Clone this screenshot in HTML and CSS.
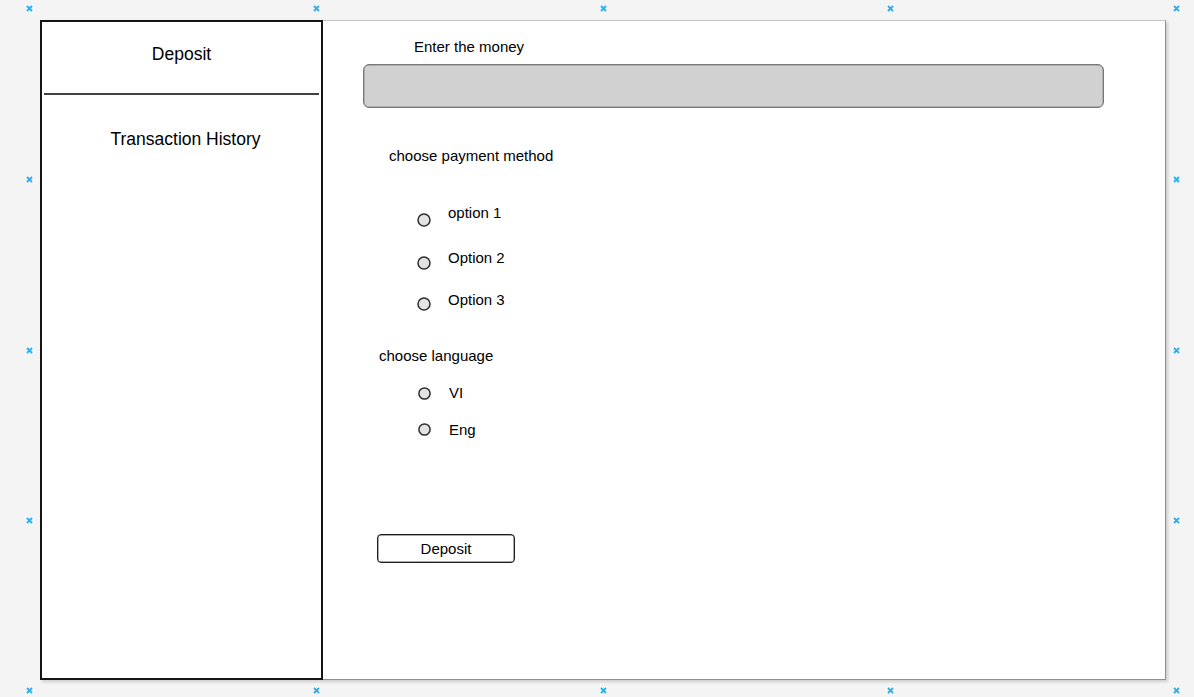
FILE: index.html
```html
<!DOCTYPE html>
<html>
<head>
<meta charset="utf-8">
<link rel="stylesheet" href="styles.css">
</head>
<body>
<div class="canvas">
  <div class="frame">
    <nav class="sidebar">
      <div class="nav-item nav-deposit">Deposit</div>
      <div class="nav-divider"></div>
      <div class="nav-item nav-history">Transaction History</div>
    </nav>
    <main class="main">
      <div class="label money-label">Enter the money</div>
      <div class="money-input"></div>
      <div class="label pay-label">choose payment method</div>
      <div class="opt opt1">
        <svg class="radio r14" viewBox="0 0 14 14"><circle cx="7" cy="7" r="6" /></svg>
        <span class="opt-text">option 1</span>
      </div>
      <div class="opt opt2">
        <svg class="radio r14" viewBox="0 0 14 14"><circle cx="7" cy="7" r="6" /></svg>
        <span class="opt-text">Option 2</span>
      </div>
      <div class="opt opt3">
        <svg class="radio r14" viewBox="0 0 14 14"><circle cx="7" cy="7" r="6" /></svg>
        <span class="opt-text">Option 3</span>
      </div>
      <div class="label lang-label">choose language</div>
      <div class="opt opt-vi">
        <svg class="radio r13" viewBox="0 0 13 13"><circle cx="6.5" cy="6.5" r="5.6" /></svg>
        <span class="opt-text">VI</span>
      </div>
      <div class="opt opt-eng">
        <svg class="radio r13" viewBox="0 0 13 13"><circle cx="6.5" cy="6.5" r="5.6" /></svg>
        <span class="opt-text">Eng</span>
      </div>
      <div class="btn">Deposit</div>
    </main>
  </div>

  <svg class="mk mx0 my0" viewBox="0 0 7 7"><path d="M1 1L6 6M6 1L1 6"/></svg>
  <svg class="mk mx1 my0" viewBox="0 0 7 7"><path d="M1 1L6 6M6 1L1 6"/></svg>
  <svg class="mk mx2 my0" viewBox="0 0 7 7"><path d="M1 1L6 6M6 1L1 6"/></svg>
  <svg class="mk mx3 my0" viewBox="0 0 7 7"><path d="M1 1L6 6M6 1L1 6"/></svg>
  <svg class="mk mx4 my0" viewBox="0 0 7 7"><path d="M1 1L6 6M6 1L1 6"/></svg>
  <svg class="mk mx0 my1" viewBox="0 0 7 7"><path d="M1 1L6 6M6 1L1 6"/></svg>
  <svg class="mk mx4 my1" viewBox="0 0 7 7"><path d="M1 1L6 6M6 1L1 6"/></svg>
  <svg class="mk mx0 my2" viewBox="0 0 7 7"><path d="M1 1L6 6M6 1L1 6"/></svg>
  <svg class="mk mx4 my2" viewBox="0 0 7 7"><path d="M1 1L6 6M6 1L1 6"/></svg>
  <svg class="mk mx0 my3" viewBox="0 0 7 7"><path d="M1 1L6 6M6 1L1 6"/></svg>
  <svg class="mk mx4 my3" viewBox="0 0 7 7"><path d="M1 1L6 6M6 1L1 6"/></svg>
  <svg class="mk mx0 my4" viewBox="0 0 7 7"><path d="M1 1L6 6M6 1L1 6"/></svg>
  <svg class="mk mx1 my4" viewBox="0 0 7 7"><path d="M1 1L6 6M6 1L1 6"/></svg>
  <svg class="mk mx2 my4" viewBox="0 0 7 7"><path d="M1 1L6 6M6 1L1 6"/></svg>
  <svg class="mk mx3 my4" viewBox="0 0 7 7"><path d="M1 1L6 6M6 1L1 6"/></svg>
  <svg class="mk mx4 my4" viewBox="0 0 7 7"><path d="M1 1L6 6M6 1L1 6"/></svg>
</div>
</body>
</html>
```

FILE: styles.css
```css
html, body {
  margin: 0;
  padding: 0;
  background: #f4f4f4;
}

body {
  font-family: "Liberation Sans", Arial, sans-serif;
  color: #000;
}

.canvas {
  position: relative;
  width: 1194px;
  height: 697px;
  overflow: hidden;
  padding-top: 20px;
  box-sizing: border-box;
}

.frame {
  margin-left: 40px;
  width: 1126px;
  height: 660px;
  box-sizing: border-box;
  background: #fff;
  border: 1px solid #c4c4c4;
  border-right-color: #8e8e8e;
  border-bottom-color: #8e8e8e;
  box-shadow: 2px 2px 3px rgba(0, 0, 0, 0.16);
  display: flex;
}

/* ---------- sidebar ---------- */
.sidebar {
  width: 283px;
  flex: none;
  margin: -1px 0 -1px -1px;
  border: 2px solid #151515;
  box-sizing: border-box;
  display: flex;
  flex-direction: column;
}

.nav-item {
  font-size: 17.5px;
  line-height: 21px;
  text-align: center;
}

.nav-deposit {
  margin-top: 22px;
}

.nav-divider {
  height: 2px;
  background: #404040;
  margin: 28px 2px 0 2px;
}

.nav-history {
  margin-top: 34px;
  padding-left: 8px;
}

/* ---------- main ---------- */
.main {
  flex: 1;
  display: flex;
  flex-direction: column;
  align-items: flex-start;
  font-size: 15px;
  line-height: 18px;
}

.money-label {
  margin: 17px 0 0 91px;
}

.money-input {
  margin: 8px 0 0 40px;
  width: 741px;
  height: 44px;
  box-sizing: border-box;
  background: #d1d1d1;
  border: 1px solid #787878;
  border-radius: 6px;
  box-shadow: inset 0 0 0 0.5px #8a8a8a;
}

.pay-label {
  margin: 39px 0 0 66px;
}

.opt {
  display: flex;
  align-items: flex-start;
  height: 18px;
  gap: 17px;
}

.opt .radio {
  flex: none;
}

.radio circle {
  fill: #e3e3e3;
  stroke: #2e2e2e;
  stroke-width: 1.5;
}

.r14 {
  width: 14px;
  height: 14px;
  margin-left: 94px;
}

.r13 {
  width: 13px;
  height: 13px;
  margin-left: 95px;
}

.opt1 { margin-top: 39px; }
.opt1 .radio { margin-top: 9px; }

.opt2 { margin-top: 27px; }
.opt2 .radio { margin-top: 7px; }

.opt3 { margin-top: 24px; }
.opt3 .radio { margin-top: 6px; }

.lang-label {
  margin: 38px 0 0 56px;
}

.opt-vi { margin-top: 19px; }
.opt-vi .radio { margin-top: 3px; }

.opt-eng { margin-top: 19px; }
.opt-eng .radio { margin-top: 2px; }

.opt-vi .opt-text,
.opt-eng .opt-text {
  margin-left: 1px;
}

.btn {
  margin: 95px 0 0 54px;
  width: 138px;
  height: 29px;
  box-sizing: border-box;
  border: 1px solid #1e1e1e;
  box-shadow: inset 0 0 0 0.5px #555;
  border-radius: 4px;
  background: #fff;
  text-align: center;
  line-height: 27px;
}

/* ---------- canvas handles ---------- */
.mk {
  position: absolute;
  width: 7px;
  height: 7px;
}

.mk path {
  stroke: #2aaef0;
  stroke-width: 1.8;
  fill: none;
}

.mx0 { left: 26px; }
.mx1 { left: 313px; }
.mx2 { left: 600px; }
.mx3 { left: 887px; }
.mx4 { left: 1173px; }

.my0 { top: 5px; }
.my1 { top: 176px; }
.my2 { top: 347px; }
.my3 { top: 517px; }
.my4 { top: 687px; }
```
